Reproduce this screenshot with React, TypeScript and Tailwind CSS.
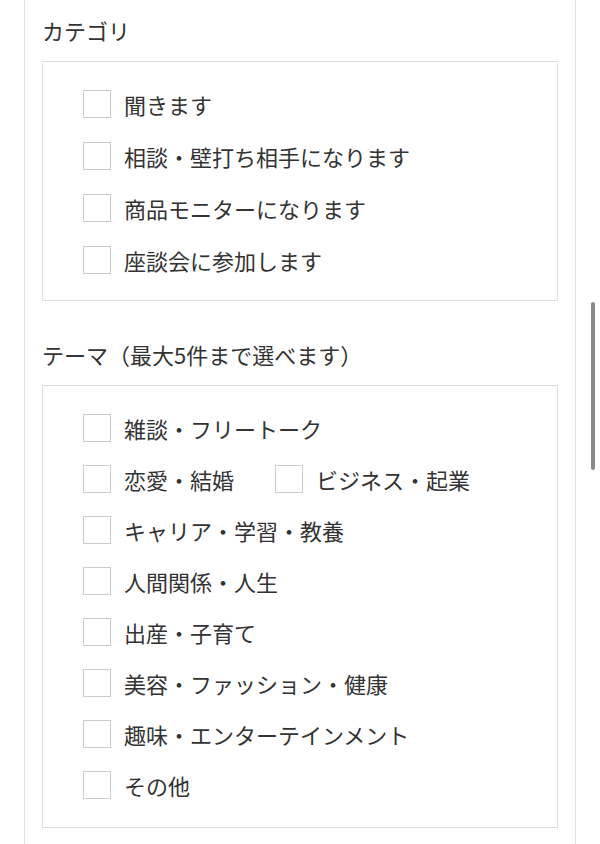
const categories = [
  "聞きます",
  "相談・壁打ち相手になります",
  "商品モニターになります",
  "座談会に参加します",
];

const themes = [
  "雑談・フリートーク",
  "恋愛・結婚",
  "ビジネス・起業",
  "キャリア・学習・教養",
  "人間関係・人生",
  "出産・子育て",
  "美容・ファッション・健康",
  "趣味・エンターテインメント",
  "その他",
];

function CheckItem({ label, inline }: { label: string; inline?: boolean }) {
  return (
    <label className={`flex items-center gap-[13px] cursor-pointer ${inline ? "mr-[41px]" : ""}`}>
      <input type="checkbox" className="peer sr-only" />
      <span className="w-7 h-7 shrink-0 border border-[#cccccc] bg-white peer-checked:bg-[#333333]" />
      <span className="text-[22px] leading-7 text-[#333333] whitespace-nowrap">{label}</span>
    </label>
  );
}

export default function App() {
  return (
    <div
      className="relative min-h-[844px] bg-white pl-6 overflow-hidden"
      style={{ fontFamily: '"Noto Sans CJK JP", "Noto Sans", sans-serif' }}
    >
      <div className="w-[552px] min-h-[844px] border-x border-[#e2e2e2] px-[17px] pt-[15px] pb-10">
        <h2 className="text-[22px] leading-[30px] text-[#333333] font-normal">カテゴリ</h2>
        <div className="mt-4 border border-[#dddddd] pl-10 pr-4 pt-7 pb-[26px] flex flex-col gap-6">
          {categories.map((c) => (
            <CheckItem key={c} label={c} />
          ))}
        </div>

        <h2 className="mt-[38px] text-[22px] leading-[30px] text-[#333333] font-normal">
          テーマ（最大5件まで選べます）
        </h2>
        <div className="mt-4 border border-[#dddddd] pl-10 pr-10 py-7 flex flex-wrap gap-y-[23px]">
          {themes.map((t) => (
            <CheckItem key={t} label={t} inline />
          ))}
        </div>
      </div>

      {/* scroll indicator */}
      <div className="absolute left-[591px] top-[302px] w-1 h-[168px] rounded-full bg-[#8a8a8a]" />
    </div>
  );
}
